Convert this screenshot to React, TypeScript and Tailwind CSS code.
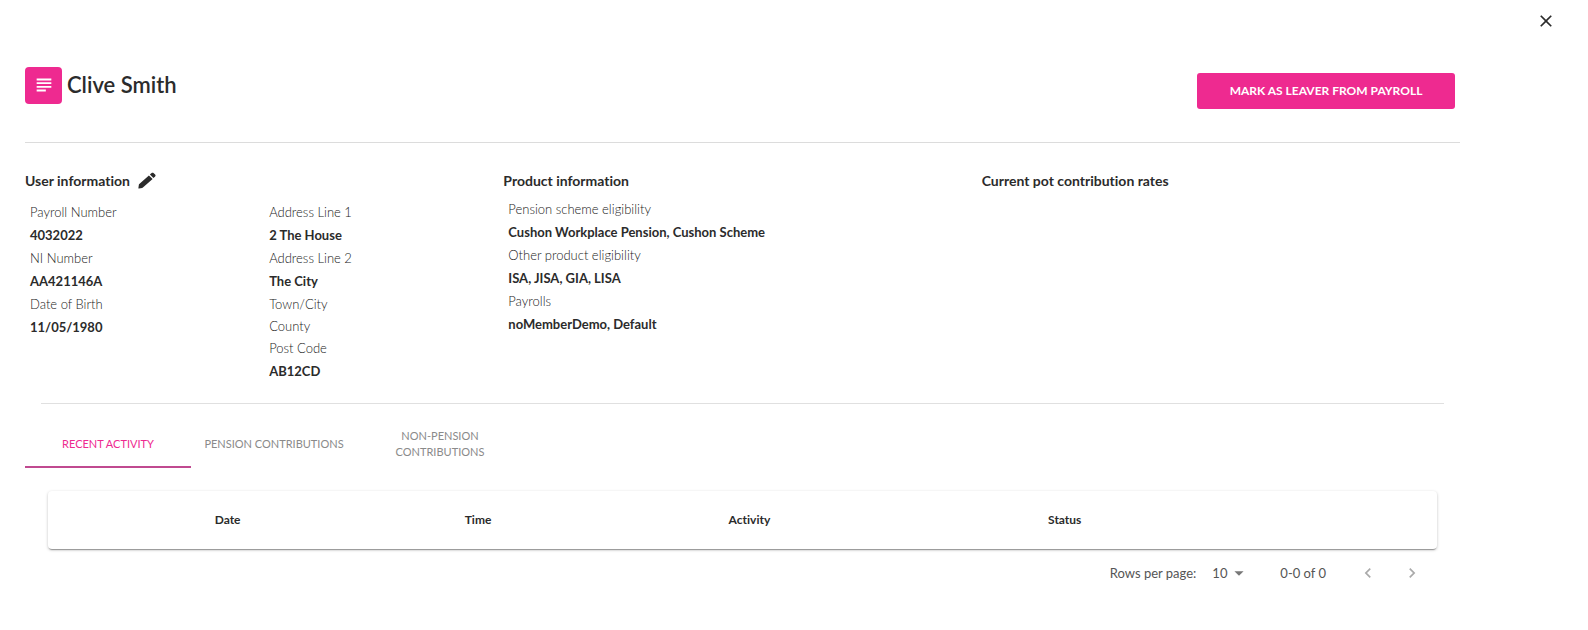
import { useState } from "react";
import {
  MdArrowDropDown,
  MdChevronLeft,
  MdChevronRight,
  MdClose,
  MdSubject,
} from "react-icons/md";

interface Field {
  label: string;
  value?: string;
}

const personalFields: Field[] = [
  { label: "Payroll Number", value: "4032022" },
  { label: "NI Number", value: "AA421146A" },
  { label: "Date of Birth", value: "11/05/1980" },
];

const addressFields: Field[] = [
  { label: "Address Line 1", value: "2 The House" },
  { label: "Address Line 2", value: "The City" },
  { label: "Town/City" },
  { label: "County" },
  { label: "Post Code", value: "AB12CD" },
];

const productFields: Field[] = [
  {
    label: "Pension scheme eligibility",
    value: "Cushon Workplace Pension, Cushon Scheme",
  },
  { label: "Other product eligibility", value: "ISA, JISA, GIA, LISA" },
  { label: "Payrolls", value: "noMemberDemo, Default" },
];

const tabs = [
  "Recent activity",
  "Pension contributions",
  "Non-pension contributions",
];

const PencilIcon = () => (
  <svg viewBox="0 0 18 18" className="size-[18px]" fill="currentColor">
    <path d="M1 16.6c-.5 0-.7-.3-.6-.7l.5-3.3c0-.3.2-.5.4-.7L10.900 3.500l3.700 3.500-9.700 8.600c-.2.2-.5.300-.8.400z" />
    <path d="M11.900 2.600l1.700-1.500c.6-.5 1.300-.5 1.900 0l1.600 1.500c.6.6.6 1.300 0 1.900l-1.600 1.500z" />
  </svg>
);

const FieldList = ({ fields }: { fields: Field[] }) => (
  <dl className="pl-[5px]">
    {fields.map(({ label, value }) => (
      <div key={label}>
        <dt className="text-[13px] leading-[22px] font-light text-[#222]">
          {label}
        </dt>
        {value && (
          <dd className="text-[13px] leading-[24px] font-bold text-[#2b2b2b]">
            {value}
          </dd>
        )}
      </div>
    ))}
  </dl>
);

const App = () => {
  const [activeTab, setActiveTab] = useState<number>(0);
  const [rowsPerPage, setRowsPerPage] = useState<string>("10");

  return (
    <div className="min-h-screen bg-white font-[Lato,sans-serif] text-[#2b2b2b] [font-variant-ligatures:none]">
      <div className="flex justify-end pt-[11px] pr-8">
        <button type="button" aria-label="Close">
          <MdClose className="text-[20px]" />
        </button>
      </div>

      <main className="pr-32 pl-[25px]">
        <header className="flex items-center justify-between border-b border-[#dcdcdc] pt-[30px] pr-[5px] pb-[33px]">
          <div className="flex items-center gap-[5px]">
            <span className="flex size-[37px] items-center justify-center rounded bg-[#ee2a90] text-white">
              <MdSubject className="text-[22px]" />
            </span>
            <h1 className="text-[22px] leading-[28px] font-semibold">
              Clive Smith
            </h1>
          </div>
          <button
            type="button"
            className="mt-3 h-9 w-[258px] rounded-[3px] bg-[#ee2a90] text-[12px] font-bold text-white uppercase"
          >
            Mark as leaver from payroll
          </button>
        </header>

        <div className="grid grid-cols-3 pt-[26px]">
          <section>
            <h2 className="flex items-center gap-2 text-[14px] leading-[24px] font-bold">
              User information
              <button type="button" aria-label="Edit user information">
                <PencilIcon />
              </button>
            </h2>
            <div className="grid grid-cols-2 pt-2">
              <FieldList fields={personalFields} />
              <FieldList fields={addressFields} />
            </div>
          </section>
          <section>
            <h2 className="text-[14px] leading-[24px] font-bold">
              Product information
            </h2>
            <div className="pt-[5px]">
              <FieldList fields={productFields} />
            </div>
          </section>
          <section>
            <h2 className="text-[14px] leading-[24px] font-bold">
              Current pot contribution rates
            </h2>
          </section>
        </div>

        <hr className="mx-4 mt-5 border-[#e0e0e0]" />

        <div role="tablist" className="flex pt-4">
          {tabs.map((tab, index) => (
            <button
              key={tab}
              type="button"
              role="tab"
              aria-selected={activeTab === index}
              onClick={() => setActiveTab(index)}
              className={`h-12 w-[166px] border-b-2 px-3 pt-0.5 text-[11px] leading-[16px] uppercase ${
                activeTab === index
                  ? "border-[#c04a90] text-[#ee2a90]"
                  : "border-transparent text-[#8a8a8a]"
              }`}
            >
              {tab}
            </button>
          ))}
        </div>

        <div className="px-[23px] pt-[23px]">
          <div className="rounded shadow-[0_1px_3px_rgba(0,0,0,0.25),0_2px_1px_-1px_rgba(0,0,0,0.3)]">
            <table className="w-full table-fixed text-left text-[12px]">
              <thead>
                <tr className="h-[58px]">
                  <td className="w-[12%]" />
                  <th className="w-[18%]">Date</th>
                  <th className="w-[19%]">Time</th>
                  <th className="w-[23%]">Activity</th>
                  <th>Status</th>
                </tr>
              </thead>
            </table>
          </div>

          <div className="flex items-center justify-end pt-3 pr-[15px] text-[13px] leading-[24px] text-[#555]">
            <label htmlFor="rows-per-page">Rows per page:</label>
            <div className="ml-4 flex items-center">
              <select
                id="rows-per-page"
                value={rowsPerPage}
                onChange={(e) => setRowsPerPage(e.target.value)}
                className="w-9 appearance-none bg-transparent"
              >
                <option>10</option>
                <option>25</option>
                <option>50</option>
              </select>
              <MdArrowDropDown className="pointer-events-none -ml-5 text-[22px] text-[#777]" />
            </div>
            <span className="ml-[30px]">0-0 of 0</span>
            <button type="button" aria-label="Previous page" className="ml-8">
              <MdChevronLeft className="text-[20px] text-[#aaa]" />
            </button>
            <button type="button" aria-label="Next page" className="ml-6">
              <MdChevronRight className="text-[20px] text-[#aaa]" />
            </button>
          </div>
        </div>
      </main>
    </div>
  );
};

export default App;
